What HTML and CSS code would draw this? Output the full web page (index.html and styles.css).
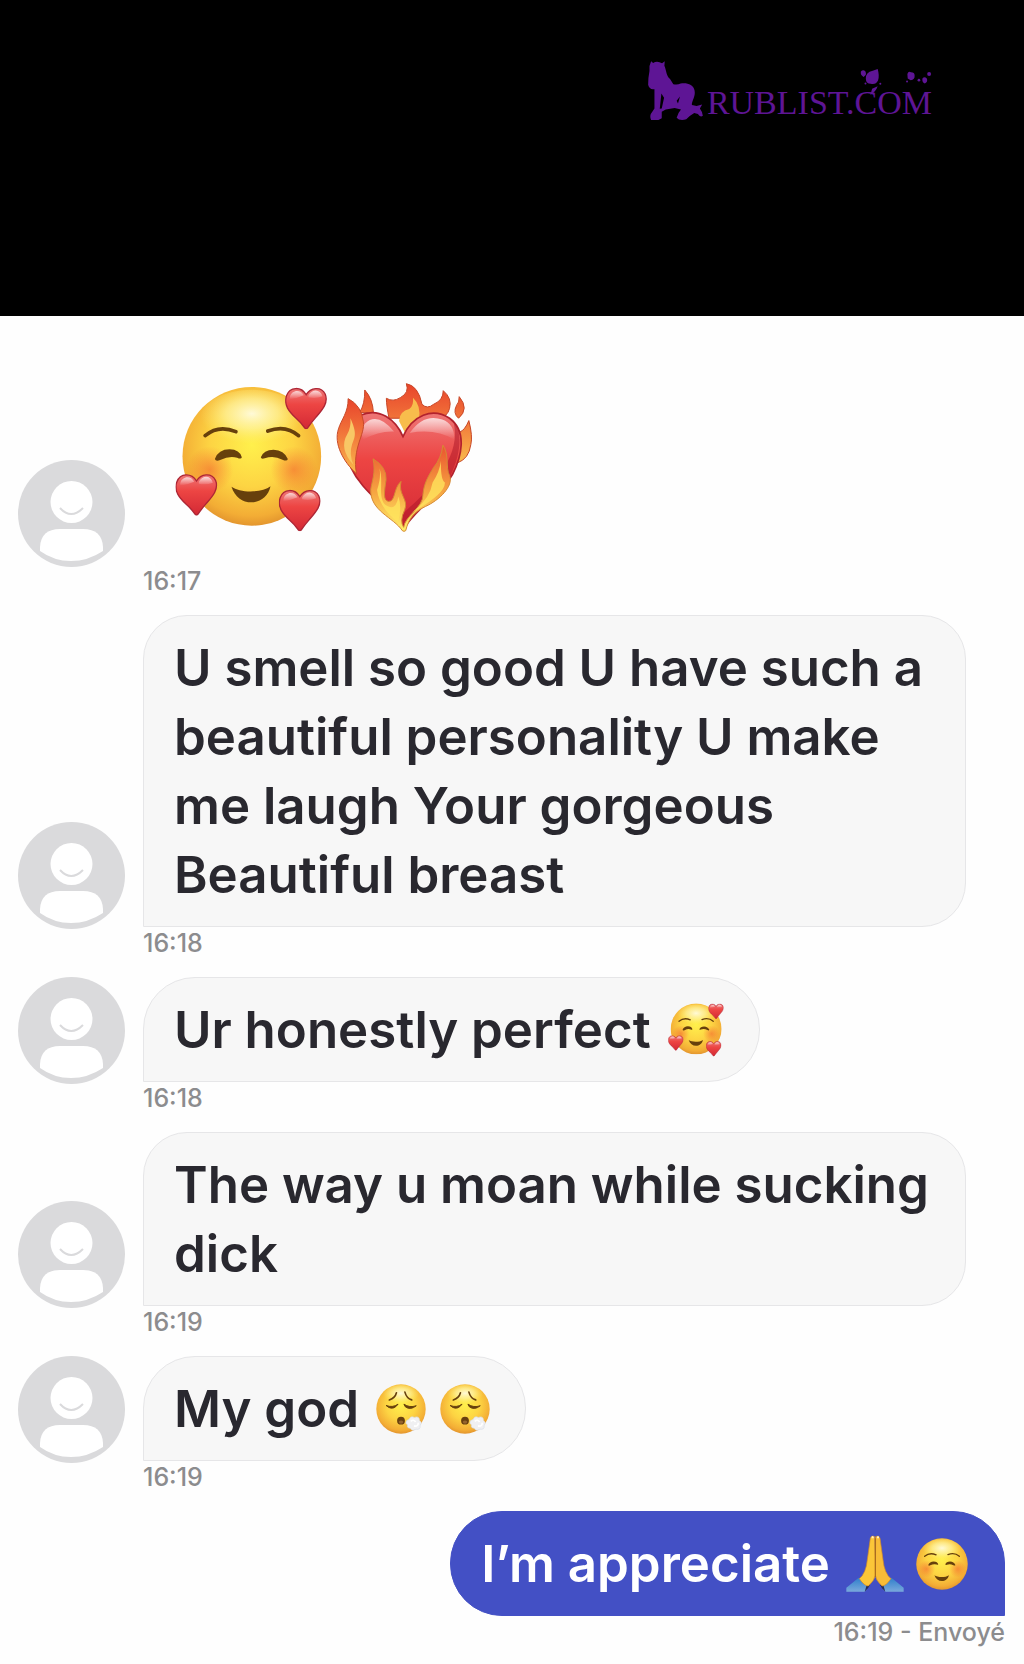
FILE: index.html
```html
<!DOCTYPE html>
<html lang="fr">
<head>
<meta charset="utf-8">
<meta name="viewport" content="width=device-width, initial-scale=1">
<title>Messages</title>
<link rel="stylesheet" href="styles.css">
</head>
<body>
<svg class="sprite" aria-hidden="true">
  <defs>
    <radialGradient id="skin" cx="0.5" cy="0.42" r="0.6">
      <stop offset="0" stop-color="#fff04c"/><stop offset="0.5" stop-color="#fdd443"/><stop offset="0.85" stop-color="#f3ad35"/><stop offset="1" stop-color="#df8f2c"/>
    </radialGradient>
    <linearGradient id="shine" x1="0" y1="0" x2="0" y2="1">
      <stop offset="0" stop-color="#fff" stop-opacity="0.75"/><stop offset="1" stop-color="#fff" stop-opacity="0"/>
    </linearGradient>
    <radialGradient id="glow" cx="0.5" cy="0.4" r="0.5">
      <stop offset="0" stop-color="#fffde8" stop-opacity="0.9"/><stop offset="0.5" stop-color="#fff8b0" stop-opacity="0.6"/><stop offset="1" stop-color="#fff27a" stop-opacity="0"/>
    </radialGradient>
    <radialGradient id="blush"><stop offset="0" stop-color="#f4672f" stop-opacity="0.6"/><stop offset="1" stop-color="#f4672f" stop-opacity="0"/></radialGradient>
    <linearGradient id="red" x1="0" y1="0" x2="0" y2="1">
      <stop offset="0" stop-color="#ee7777"/><stop offset="0.4" stop-color="#ed4543"/><stop offset="1" stop-color="#d32935"/>
    </linearGradient>
    <linearGradient id="flame" x1="0" y1="0" x2="0" y2="1">
      <stop offset="0" stop-color="#e8432b"/><stop offset="0.5" stop-color="#f27a3c"/><stop offset="1" stop-color="#f9bb4c"/>
    </linearGradient>
    <linearGradient id="ember" x1="0" y1="0" x2="0" y2="1">
      <stop offset="0" stop-color="#ea532e"/><stop offset="0.55" stop-color="#f6a642"/><stop offset="1" stop-color="#fff06a"/>
    </linearGradient>
    <linearGradient id="sleeve" x1="0" y1="0" x2="0" y2="1">
      <stop offset="0" stop-color="#2f7fcb"/><stop offset="1" stop-color="#79a9dc"/>
    </linearGradient>
    <symbol id="little-heart" viewBox="0 0 126 126">
      <path d="M63 22C76 0 108-4 120 20C131 46 111 68 92 90Q78 106 67 122Q63 126 59 122Q48 106 32 92C13 74-6 53 4 25C14-3 48-3 63 22Z" fill="url(#red)" stroke="#ad2635" stroke-width="4"/>
      <path d="M14 30C18 8 46 4 56 24Q34 34 14 36ZM70 24C82 3 106 5 112 27Q92 35 70 30Z" fill="url(#shine)"/>
    </symbol>
    <symbol id="happy" viewBox="66 50 420 420">
      <circle cx="276" cy="260" r="208" fill="url(#skin)"/>
      <ellipse cx="276" cy="150" rx="156" ry="90" fill="url(#glow)"/>
      <circle cx="150" cy="300" r="70" fill="url(#blush)"/><circle cx="402" cy="300" r="70" fill="url(#blush)"/>
      <path d="M136 198Q176 164 228 186M324 184Q378 164 416 198" fill="none" stroke="#67400c" stroke-width="11" stroke-linecap="round"/>
      <path d="M165 268Q176 239 209 239Q240 240 246 263Q244 270 232 264Q209 257 181 271Q168 277 165 268ZM303 263Q311 240 341 240Q373 241 384 268Q382 276 368 270Q341 256 315 266Q304 270 303 263Z" fill="#67400c"/>
      <path d="M215 351C240 370 306 370 332 350C326 380 301 398 275 398C248 398 225 382 215 351Z" fill="#67400c"/>
    </symbol>
    <symbol id="adoring" viewBox="40 40 470 450">
      <use href="#happy" x="66" y="50" width="420" height="420"/>
      <use href="#little-heart" x="376" y="53" width="126" height="126"/>
      <use href="#little-heart" x="47" y="312" width="126" height="126"/>
      <use href="#little-heart" x="357" y="359" width="126" height="126"/>
    </symbol>
    <symbol id="fire-heart" viewBox="525 30 420 460">
      <path d="M601 125Q618 100 617 57Q641 83 643 125ZM690 142Q682 104 682 82Q702 94 724 80Q752 65 742 38Q778 44 789 100Q805 116 824 100Q853 88 853 59Q880 82 872 112Q866 138 839 142ZM899 142Q881 127 893 103Q901 96 901 77Q932 114 899 142ZM902 184Q918 178 930 149Q942 196 936 221Q930 264 896 276Z" fill="url(#flame)" stroke="#c74526" stroke-width="3"/>
      <path d="M720 150Q722 120 751 114Q765 103 762 80Q787 103 780 146L739 188Z" fill="#f8bd4c"/>
      <path d="M732 197C760 134 820 108 872 142C927 182 907 260 881 311C850 370 781 400 732 477C681 402 609 363 576 291C546 222 552 157 604 133C660 108 709 145 732 197Z" fill="url(#red)" stroke="#b2222d" stroke-width="5"/>
      <path d="M618 158Q655 122 705 182Q660 180 612 206Q600 177 618 158ZM752 186Q795 126 850 146Q888 160 886 206Q830 172 752 186Z" fill="url(#shine)"/>
      <path d="M883 150C911 180 907 246 876 312C844 372 770 396 732 474C719 461 722 442 740 421C800 367 914 262 883 150Z" fill="#a91425" opacity="0.5"/>
      <path d="M592 309C552 272 523 218 538 174C546 147 568 124 567 83Q607 103 613 153C618 192 579 230 592 309Z" fill="url(#flame)" stroke="#c84a29" stroke-width="3"/>
      <path d="M583 282C554 251 547 219 564 191Q576 170 574 142C592 184 590 194 579 220Q569 250 583 282Z" fill="#f8c765"/>
      <path d="M730 480C704 440 632 421 635 356C638 333 651 305 642 264Q684 289 681 327C676 363 671 388 688 392C711 393 702 353 726 332C716 371 750 386 737 417Q721 451 734 470C738 435 794 410 792 371C795 338 808 316 824 290Q847 263 852 223C872 252 859 290 872 315C885 346 840 389 800 407C761 425 749 447 740 480Q735 484 730 480Z" fill="url(#ember)" stroke="#d58a35" stroke-width="3"/>
      <path d="M717 455Q660 410 654 358Q667 318 661 292C677 331 648 398 693 409Q713 412 718 377Q730 410 717 455ZM759 425Q813 385 821 335Q842 304 846 270Q845 329 858 335Q859 370 759 425Z" fill="#ffe45d" opacity="0.8"/>
    </symbol>
    <symbol id="exhaling" viewBox="44 60 160 160">
      <circle cx="124" cy="140" r="76" fill="url(#skin)"/>
      <ellipse cx="124" cy="98" rx="56" ry="32" fill="url(#glow)"/>
      <path d="M88 112Q106 106 110 90M136 88Q141 107 157 112" fill="none" stroke="#67400c" stroke-width="5" stroke-linecap="round"/>
      <path d="M78 129Q98 137 115 125Q102 143 86 135ZM133 125Q150 137 171 130Q153 145 137 133Z" fill="#67400c" stroke="#67400c" stroke-width="3" stroke-linejoin="round"/>
      <circle cx="124" cy="176" r="12" fill="#68400f"/><ellipse cx="124" cy="180" rx="7" ry="5" fill="#94642e"/>
      <path d="M139 184Q138 174 149 172Q153 160 165 166Q180 160 181 175Q191 182 183 191Q184 205 170 202Q158 210 152 199Q141 198 144 189Z" fill="#f0f0f2" stroke="#d5dce5" stroke-width="2"/>
      <path d="M154 178Q163 170 169 180M164 192Q177 195 177 182" fill="none" stroke="#fff" stroke-width="5"/>
    </symbol>
    <symbol id="praying" viewBox="54 38 174 174">
      <path d="M55 208V196Q70 184 92 166L117 184Q121 200 110 208ZM227 208V196Q208 180 190 166L166 184Q161 200 172 208Z" fill="url(#sleeve)"/>
      <path d="M110 208Q122 197 126 188L118 182ZM172 208Q160 197 156 188L164 182Z" fill="#252d56"/>
      <path d="M127 48Q130 38 140 43L142 158Q140 174 121 191Q109 191 94 169Q114 153 118 112Z" fill="#fbc638" stroke="#d18a25" stroke-width="2"/>
      <path d="M156 48Q153 38 143 43L142 158Q143 174 162 191Q174 191 189 169Q169 153 165 112Z" fill="#f8bc37" stroke="#d18a25" stroke-width="2"/>
      <path d="M142 48V164" stroke="#a3651b" stroke-width="3"/>
      <path d="M131 48V43Q135 39 137 44V48ZM147 48V43Q151 39 153 44V48Z" fill="#fff0c8"/>
    </symbol>
    <symbol id="person" viewBox="0 0 107 107">
      <circle cx="53.500" cy="53.500" r="53.500" fill="#dadadc"/>
      <circle cx="53.500" cy="42" r="21" fill="#fff"/>
      <path d="M42 48Q53 60 65 48" fill="none" stroke="#dadadc" stroke-width="2"/>
      <path d="M22 91V87Q23 69 42 69H65Q84 69 85 87V91Q70 101 53 101Q36 101 22 91Z" fill="#fff"/>
    </symbol>
  </defs>
</svg>

<header class="banner">
  <div class="brand">
    <svg class="brand-figure" viewBox="54 44 174 184" aria-hidden="true">
      <path d="M66 48L72 53Q84 45 99 54L107 48L106 61C113 78 111 91 123 101L133 117Q145 120 155 115C173 112 194 117 197 136C201 154 187 170 189 180L203 183L220 178L213 190Q222 202 222 212Q214 218 207 207L196 204Q179 214 172 223Q151 228 143 218Q147 203 156 193L137 189L110 193L98 200V220L88 225H66Q60 211 68 202L76 190V132Q61 135 57 119Q57 96 61 77Q59 61 66 48Z"/>
      <path class="brand-gap" d="M97 145L92 191L98 190L105 158ZM143 167L153 154L147 175Z"/>
    </svg>
    <div class="brand-name">RUBLIST.COM
      <svg class="brand-petals" viewBox="680 66 230 94" aria-hidden="true">
        <path d="M705 101Q704 82 726 77L741 72Q747 93 742 107Q735 121 720 117Q705 117 705 101ZM690 80Q697 71 704 80Q709 91 698 96Q688 91 690 80ZM831 87Q834 78 842 82Q853 82 853 92Q854 105 841 106L832 101ZM877 100Q883 93 890 101Q894 111 884 116Q874 112 877 100ZM719 151L724 132L741 124Q736 139 719 151Z"/>
        <circle cx="897" cy="87" r="6"/><circle cx="866" cy="106" r="4"/><circle cx="830" cy="110" r="3"/><circle cx="704" cy="116" r="3"/><circle cx="749" cy="117" r="3"/>
      </svg>
    </div>
  </div>
</header>

<main class="chat">
  <article class="message">
    <svg class="avatar" aria-hidden="true"><use href="#person"/></svg>
    <p class="reaction">
      <svg class="large-face" role="img" aria-label="🥰"><use href="#adoring"/></svg>
      <svg class="large-heart" role="img" aria-label="❤️‍🔥"><use href="#fire-heart"/></svg>
    </p>
    <time class="stamp">16:17</time>
  </article>
  <article class="message">
    <svg class="avatar" aria-hidden="true"><use href="#person"/></svg>
    <p class="bubble long">U smell so good U have such a beautiful personality U make me laugh Your gorgeous Beautiful breast</p>
    <time class="stamp">16:18</time>
  </article>
  <article class="message">
    <svg class="avatar" aria-hidden="true"><use href="#person"/></svg>
    <p class="bubble">Ur honestly perfect <svg class="adoring" role="img" aria-label="🥰"><use href="#adoring"/></svg></p>
    <time class="stamp">16:18</time>
  </article>
  <article class="message">
    <svg class="avatar" aria-hidden="true"><use href="#person"/></svg>
    <p class="bubble long">The way u moan while sucking dick</p>
    <time class="stamp">16:19</time>
  </article>
  <article class="message">
    <svg class="avatar" aria-hidden="true"><use href="#person"/></svg>
    <p class="bubble">My god <svg class="emoji" role="img" aria-label="😮‍💨"><use href="#exhaling"/></svg><svg class="emoji" role="img" aria-label="😮‍💨"><use href="#exhaling"/></svg></p>
    <time class="stamp">16:19</time>
  </article>
  <article class="message sent">
    <p class="bubble">I’m appreciate <svg class="hands" role="img" aria-label="🙏"><use href="#praying"/></svg><svg class="emoji" role="img" aria-label="☺️"><use href="#happy"/></svg></p>
    <div class="stamp"><time>16:19</time> - Envoyé</div>
  </article>
</main>
</body>
</html>
```
FILE: styles.css
```css
* { box-sizing: border-box; }
body {
  margin: 0;
  background: #fefefe;
  color: #29282f;
  font-family: Inter, "Liberation Sans", sans-serif;
}
p { margin: 0; }
svg { flex: none; }
.sprite { position: absolute; width: 0; height: 0; }

.banner {
  display: flex;
  justify-content: flex-end;
  height: 316px;
  padding: 60px 92px 0 0;
  background: #000;
}
.brand { display: flex; height: 62px; gap: 2px; color: #5e1595; fill: #5e1595; }
.brand-figure { width: 58px; height: 61px; }
.brand-gap { fill: #000; }
.brand-name {
  position: relative;
  padding-top: 19px;
  font: 34px/48px "Liberation Serif", serif;
}
.brand-petals { position: absolute; top: 7px; right: -2px; width: 77px; height: 31px; }

.chat { padding: 65px 19px 16px 18px; }
.message {
  display: grid;
  grid-template-columns: 107px minmax(0, 1fr);
  column-gap: 18px;
  justify-items: start;
  align-items: end;
  padding-right: 39px;
}
.avatar { width: 107px; height: 107px; margin-bottom: -2px; }
.reaction { display: flex; gap: 4px; height: 184px; padding-left: 30px; }
.large-face { width: 157px; height: 150px; margin-top: 2px; }
.large-heart { width: 140px; height: 153px; }
.bubble {
  display: flex;
  align-items: center;
  gap: 12px;
  padding: 17px 34px 17px 30px;
  border: 1px solid #e6e6e8;
  border-radius: 52px 52px 52px 0;
  background: #f7f7f7;
  font-size: 51px;
  font-weight: 600;
  line-height: 69px;
}
.bubble svg:first-child { margin-left: 4px; }
.long { border-radius: 44px 44px 44px 0; }
.adoring { width: 58px; height: 55px; }
.emoji { width: 52px; height: 52px; }
.hands { width: 58px; height: 58px; }
.stamp {
  grid-column: 2;
  height: 50px;
  color: #8c8c8e;
  font-size: 25px;
  font-weight: 500;
  line-height: 32px;
}
.sent { grid-template-columns: minmax(0, 1fr); justify-items: end; padding-right: 0; }
.sent .bubble {
  padding-right: 36px;
  border-color: #4350c5;
  border-radius: 52px 52px 0 52px;
  background: #4350c5;
  color: #fff;
}
.sent .stamp { grid-column: 1; height: 32px; }
```
